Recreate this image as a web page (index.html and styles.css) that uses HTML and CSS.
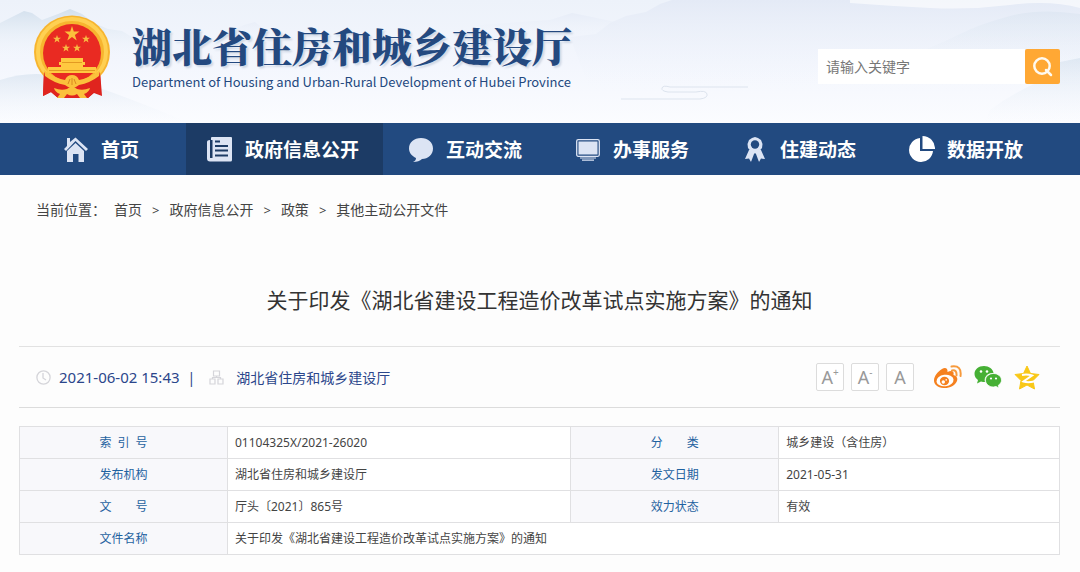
FILE: index.html
```html
<!DOCTYPE html>
<html lang="zh-Hans">
  <head>
    <meta charset="UTF-8" />
    <meta name="viewport" content="width=device-width, initial-scale=1.0" />
    <title>湖北省住房和城乡建设厅</title>
    <link rel="stylesheet" href="styles.css">
  </head>
  <body>
    <header class="header">
      <!-- 背景远山 -->
      <svg class="header-bg" viewBox="0 0 1080 123" preserveAspectRatio="none" aria-hidden="true">
        <defs>
          <linearGradient id="sky" x1="0" y1="0" x2="0" y2="1">
            <stop offset="0" stop-color="#edf2fa" />
            <stop offset="0.5" stop-color="#f3f6fd" />
            <stop offset="1" stop-color="#fbfcff" />
          </linearGradient>
          <linearGradient id="hill" x1="0" y1="0" x2="0" y2="1">
            <stop offset="0" stop-color="#d3e0ed" />
            <stop offset="1" stop-color="#f0f5fb" stop-opacity="0" />
          </linearGradient>
          <linearGradient id="hill2" x1="0" y1="0" x2="0" y2="1">
            <stop offset="0" stop-color="#e4eaf6" />
            <stop offset="1" stop-color="#f4f7fd" stop-opacity="0" />
          </linearGradient>
        </defs>
        <rect width="1080" height="123" fill="url(#sky)" />
        <path fill="url(#hill)" d="M0 23 12 17 24 11 32 13 42 20 58 14 70 9 82 14 94 23 108 29 122 31 140 42 165 56H0z" />
        <path fill="url(#hill)" opacity="0.6" d="M0 80Q35 68 75 80T190 123H0z" />
        <path fill="url(#hill2)" opacity="0.5" d="M220 36 244 25 255 22 270 34 300 42H220z" />
        <path fill="url(#hill2)" opacity="0.7" d="M480 25 520 22 550 20 572 13 592 17 615 22 640 40H480z" />
        <path fill="url(#hill2)" d="M570 37 596 34 610 23 626 16 646 12 660 4 672 0H1080V90H590z" />
        <path fill="#fff" opacity="0.6" d="M850 0H1080V8Q1050 0 1010 5T930 8T850 3z" />
        <path fill="url(#hill)" opacity="0.4" d="M900 60Q940 44 960 34T1010 16T1080 14V75H880z" />
        <path fill="url(#hill)" opacity="0.6" d="M990 110Q1010 95 1034 84T1060 62L1080 58V123H985z" />
        <path fill="none" stroke="#dde4ee" d="M621 99H700Q708 98 707 94T696 92H668Q661 91 662 88T670 87H748" />
      </svg>

      <a class="brand" href="#">
        <svg class="emblem" viewBox="0 0 76 84" role="img" aria-label="国徽">
          <path fill="#d81f1c" d="M10 56 9 81 17 77 24 83H54L60 78 68 81 66 56z" />
          <path fill="#fbc13c" d="M20 74Q26 69 33 74L38 70 43 74Q50 69 56 74L50 76 47 83H42L38 77 34 83H29L26 76z" />
          <ellipse cx="38" cy="37" rx="38" ry="36.500" fill="#f7b52f" />
          <ellipse cx="38" cy="37" rx="34" ry="33" fill="none" stroke="#ffd052" stroke-width="4" />
          <ellipse cx="38" cy="38" rx="29" ry="29" fill="#e92a22" />
          <path fill="#fbc13c" d="M38 11 39.800 16.500H45.500L40.900 20 42.700 25.500 38 22 33.300 25.500 35.100 20 30.500 16.500H36.200z" />
          <g fill="#f8bb42">
            <path id="star" d="M23 20 24 22.800H27L24.600 24.600 25.500 27.500 23 25.700 20.500 27.500 21.400 24.600 19 22.800H22z" />
            <use href="#star" x="29" />
            <use href="#star" x="9" y="9" />
            <use href="#star" x="20" y="9" />
          </g>
          <path fill="#ffc940" d="M27 43H49V47H51V50H49V52H62L63 58H13L14 52H27V50H25V47H27z" />
          <path fill="none" stroke="#e39a22" d="M28 47.500H48M15 55.500H61" />
          <!-- 绶带 -->
          <path fill="#e0241e" d="M10 57 22 66 32 69H44L54 66 66 57 67 80 60 77 54 83H24L17 77 9 81z" />
          <path fill="#fbc13c" d="M10 55Q20 63 31 65Q33 60 38 60T45 65Q56 63 66 55L65 61Q56 68 45 70Q38 76 31 70Q20 68 11 61z" />
          <path fill="#fbc13c" d="M20 73Q27 76 33 74Q38 69 43 74Q49 76 56 73Q55 77 50 79L53 83H46L43 79Q38 82 33 79L30 83H23L26 79Q21 77 20 73z" />
          <path fill="none" stroke="#d98920" d="M34 69 36 64M38 70V63M42 69 40 64" />
        </svg>
        <span class="brand-text">
          <span class="brand-cn">湖北省住房和城乡建设厅</span>
          <span class="brand-en">Department of Housing and Urban-Rural Development of Hubei Province</span>
        </span>
      </a>

      <form class="search">
        <input class="search-input" type="text" placeholder="请输入关键字" aria-label="请输入关键字" />
        <button class="search-btn" type="button" aria-label="搜索">
          <svg width="21" height="21" viewBox="0 0 21 21" fill="none" stroke="#fffaf0" stroke-width="2.500">
            <circle cx="10" cy="10" r="7.700" />
            <path d="M14 14 19 19" stroke-linecap="round" />
          </svg>
        </button>
      </form>
    </header>

    <nav class="nav">
      <a class="nav-item" href="#">
        <svg class="nav-icon" viewBox="0 0 26 26">
          <path d="M4 2H7V6L12.500 1.500 25 13 23 15 12.500 5 3 15 1 13 4 10z" />
          <path d="M12.500 7 21 15V26H15.500V18H10V26H4V15z" />
        </svg>
        首页
      </a>
      <a class="nav-item active" href="#">
        <svg class="nav-icon" viewBox="0 0 26 26">
          <path d="M3 4V22H4V2Q4 1 5 1H24Q25 1 25 2V24Q25 25.500 23.500 25.500H3Q0 25.500 0 22.500V6Q0 4 3 4z" />
          <path class="nav-line" d="M4.500 4V22M8 5.500H13M8 10H21M8 14.500H21M8 19.500H21" />
        </svg>
        政府信息公开
      </a>
      <a class="nav-item" href="#">
        <svg class="nav-icon" viewBox="0 0 26 26">
          <path d="M13 2C6 2 1 6.500 1 12.500 1 17 4 20 8 22 8 24 7 25 5 26 9 26 12 25 14 23 20 23 25 18.500 25 12.500 25 6.500 20 2 13 2z" />
        </svg>
        互动交流
      </a>
      <a class="nav-item" href="#">
        <svg class="nav-icon" viewBox="0 0 26 26">
          <rect x="1.700" y="3.700" width="22.600" height="16.600" rx="1.500" fill="none" stroke="#dce4f4" stroke-width="1.300" />
          <path d="M3.500 5.500H22.500V18.500H3.500zM5 21.500H21V22.500H5zM7 23.500H19V24.800H7z" />
        </svg>
        办事服务
      </a>
      <a class="nav-item" href="#">
        <svg class="nav-icon" viewBox="0 0 26 26">
          <path d="M7 14 3 23 7 22.500 9 26 12 18 14 18 17 26 19 22.500 23 23 19 14z" />
          <path d="M13 1 16 2 19 4 20.500 8 20 12 17 15.500 13 17 9 15.500 6 12 5.500 8 7 4 10 2z" />
          <circle class="nav-hole" cx="13" cy="8.500" r="4.200" />
          <path class="nav-line thin" d="M13 17V20L10 26M13 20 16 26" />
        </svg>
        住建动态
      </a>
      <a class="nav-item" href="#">
        <svg class="nav-icon white" viewBox="0 0 26 26">
          <path d="M11 2V15H24A12 12 0 1 1 11 2z" />
          <path d="M13.500 0A12.500 12.500 0 0 1 26 13H13.500z" />
        </svg>
        数据开放
      </a>
    </nav>

    <main class="main">
      <div class="crumbs">
        <span class="crumbs-label">当前位置：</span>
        <a href="#">首页</a>
        <span class="sep">&gt;</span>
        <a href="#">政府信息公开</a>
        <span class="sep">&gt;</span>
        <a href="#">政策</a>
        <span class="sep">&gt;</span>
        <a href="#">其他主动公开文件</a>
      </div>

      <h1 class="title">关于印发《湖北省建设工程造价改革试点实施方案》的通知</h1>

      <div class="meta">
        <div class="meta-info">
          <svg width="15" height="15" viewBox="0 0 15 15" fill="none" stroke="#d5d5da" stroke-width="1.300">
            <circle cx="7.500" cy="7.500" r="6.600" />
            <path d="M7 3V8L10 10" />
          </svg>
          <time class="time">2021-06-02 15:43</time>
          <span class="bar">|</span>
          <svg width="15" height="15" viewBox="0 0 15 15" fill="none" stroke="#d5d5da" stroke-width="1.200">
            <path d="M4.500 1H10.500V6H4.500zM1 9H6V14H1zM9 9H14V14H9zM7.500 6V8M3.500 9V7.500H11.500V9" />
          </svg>
          <span class="org">湖北省住房和城乡建设厅</span>
        </div>
        <div class="tools">
          <button class="font-btn" type="button">A<sup>+</sup></button>
          <button class="font-btn" type="button">A<sup>-</sup></button>
          <button class="font-btn" type="button">A</button>
          <div class="share">
            <a href="#" aria-label="微博">
              <svg width="29" height="26" viewBox="0 0 29 26">
                <path fill="#f5811f" d="M9 5C12 3 15 4 14.500 8 18 6.500 21.500 6.500 20.500 11 24 12 25 14.500 24 17 22 22 16 24.500 10.500 24 4.500 23.500 1 20.500 1 16.500 1 12 5 7.500 9 5z" />
                <ellipse cx="12" cy="16.500" rx="8.600" ry="5.700" transform="rotate(-8 12 16.500)" fill="#fff" />
                <ellipse cx="11.500" cy="17" rx="4.600" ry="4.200" fill="#f5811f" />
                <circle cx="10.300" cy="18" r="1.700" fill="#fff" />
                <circle cx="13.200" cy="15.900" r="0.800" fill="#fff" />
                <path fill="none" stroke="#f79a3c" stroke-width="2" stroke-linecap="round" d="M19 6.500Q24 5.500 23.500 11.500M18.500 2.500Q29 1 27.500 12" />
              </svg>
            </a>
            <a href="#" aria-label="微信">
              <svg width="28" height="24" viewBox="0 0 28 24">
                <path fill="#46b035" d="M10 1C4.500 1 .5 4.500 .5 9 .5 11.500 2 13.500 4 15L3 18.500 7 16.500Q9 17 11 17A8 7 0 0 1 19.500 8C19 4 15 1 10 1z" />
                <path fill="#46b035" d="M19.500 8.500C15 8.500 11.500 11.500 11.500 15.200 11.500 19 15 22 19.500 22L22 21.500 25 23 24.300 20.300C26.500 19 27.500 17 27.500 15.200 27.500 11.500 24 8.500 19.500 8.500z" stroke="#fff" stroke-width="0.800" />
                <g fill="#fff">
                  <circle cx="7" cy="6.500" r="1.300" />
                  <circle cx="13" cy="6.500" r="1.300" />
                  <circle cx="17" cy="13.500" r="1.100" />
                  <circle cx="22" cy="13.500" r="1.100" />
                </g>
              </svg>
            </a>
            <a href="#" aria-label="QQ空间">
              <svg width="26" height="25" viewBox="0 0 26 25">
                <path fill="#f9c817" stroke="#f9c817" stroke-linejoin="round" d="M13 1 16.500 8.500 25 9.500 19 15.500 20.500 24 13 20 5.500 24 7 15.500 1 9.500 9.500 8.500z" />
                <path fill="none" stroke="#fff" stroke-width="2" d="M8 10Q13 9 18 10.500L9.500 16.500Q14 18 20 16.500" />
              </svg>
            </a>
          </div>
        </div>
      </div>

      <table class="info">
        <tr>
          <th scope="row">索&ensp;引&ensp;号</th>
          <td>01104325X/2021-26020</td>
          <th scope="row">分&emsp;&emsp;类</th>
          <td>城乡建设（含住房）</td>
        </tr>
        <tr>
          <th scope="row">发布机构</th>
          <td>湖北省住房和城乡建设厅</td>
          <th scope="row">发文日期</th>
          <td>2021-05-31</td>
        </tr>
        <tr>
          <th scope="row">文&emsp;&emsp;号</th>
          <td>厅头〔2021〕865号</td>
          <th scope="row">效力状态</th>
          <td>有效</td>
        </tr>
        <tr>
          <th scope="row">文件名称</th>
          <td colspan="3">关于印发《湖北省建设工程造价改革试点实施方案》的通知</td>
        </tr>
      </table>
    </main>
  </body>
</html>
```
FILE: styles.css
```css
* {
  box-sizing: border-box;
}

body {
  margin: 0;
  background-color: #fdfdfd;
  color: #444;
  font-family: "Noto Sans", "Noto Sans CJK SC", sans-serif;
  font-size: 14px;
}

a {
  color: inherit;
  text-decoration: none;
}

/* 顶部 */
.header {
  position: relative;
  display: flex;
  justify-content: space-between;
  align-items: flex-start;
  padding: 15px 20px 24px 34px;
}

.header-bg {
  position: absolute;
  top: 0;
  left: 0;
  width: 100%;
  height: 100%;
  z-index: -1;
}

.brand {
  display: flex;
  gap: 22px;
}

.emblem {
  width: 76px;
  height: 84px;
}

.brand-text {
  display: flex;
  flex-direction: column;
  gap: 4px;
  padding-top: 6px;
  color: #24497f;
  white-space: nowrap;
}

.brand-cn {
  font-family: "Noto Serif CJK SC", "Noto Sans CJK SC", serif;
  font-size: 40px;
  font-weight: 900;
  line-height: 48px;
  text-shadow: 2px 2px 2px #d0d8e5;
}

.brand-en {
  font-family: "Noto Sans CJK SC", sans-serif;
  font-size: 13px;
  line-height: 18px;
}

.search {
  display: flex;
  margin-top: 34px;
}

.search-input {
  width: 207px;
  height: 35px;
  padding: 0 8px;
  border: none;
  background-color: #fff;
  font-family: inherit;
  font-size: 14px;
}

.search-input::placeholder {
  color: #777;
}

.search-btn {
  display: flex;
  justify-content: center;
  align-items: center;
  width: 35px;
  height: 35px;
  padding: 0;
  border: none;
  border-radius: 2px;
  background-color: #ffa834;
}

/* 导航 */
.nav {
  display: grid;
  grid-template-columns: 167fr 197fr repeat(4, 167fr);
  padding: 0 29px 0 19px;
  background-color: #224a80;
}

.nav-item {
  display: flex;
  justify-content: center;
  align-items: center;
  gap: 12px;
  height: 52px;
  padding-right: 3px;
  color: #fff;
  font-size: 19px;
  font-weight: bold;
  white-space: nowrap;
}

.nav-item.active {
  background-color: #1c3b65;
}

.nav-icon {
  width: 26px;
  height: 26px;
  fill: #dce4f4;
}

.nav-icon.white {
  fill: #fff;
}

.nav-line {
  fill: none;
  stroke: #1c3b65;
  stroke-width: 2;
}

.nav-line.thin {
  stroke: #224a80;
  stroke-width: 1;
}

.nav-hole {
  fill: #224a80;
}

/* 正文 */
.main {
  padding: 0 20px 17px 19px;
}

.crumbs {
  display: flex;
  gap: 10px;
  padding: 25px 17px 0;
  line-height: 20px;
}

.crumbs-label {
  margin-right: -2px;
}

.sep {
  font-size: 13px;
}

.title {
  margin: 65px 0 31px;
  color: #333;
  font-size: 21px;
  font-weight: normal;
  line-height: 30px;
  text-align: center;
}

.meta {
  display: flex;
  justify-content: space-between;
  align-items: center;
  height: 62px;
  padding: 0 20px 0 17px;
  border-top: 1px solid #e2e2e2;
  border-bottom: 1px solid #dcdcdc;
}

.meta-info {
  display: flex;
  align-items: center;
  gap: 8px;
  color: #2b468b;
}

.time {
  font-size: 15px;
}

.bar {
  margin-right: 6px;
}

.org {
  margin-left: 4px;
}

.tools {
  display: flex;
  align-items: center;
  gap: 7px;
}

.font-btn {
  display: flex;
  justify-content: center;
  width: 28px;
  height: 28px;
  padding: 0;
  border: 1px solid #dcdcdc;
  border-radius: 2px;
  background-color: #fff;
  color: #999;
  font-family: "Noto Sans", sans-serif;
  font-size: 18px;
  line-height: 26px;
}

.font-btn sup {
  font-size: 10px;
  line-height: 16px;
}

.share {
  display: flex;
  align-items: center;
  gap: 12px;
  margin-left: 12px;
}

.share a {
  display: flex;
}

/* 信息表 */
.info {
  width: 100%;
  margin-top: 18px;
  border-collapse: collapse;
  table-layout: fixed;
  font-size: 12px;
  line-height: 18px;
}

.info th,
.info td {
  height: 32px;
  padding: 0 7px;
  border: 1px solid #e0e0e2;
  text-align: left;
}

.info th {
  width: 20%;
  background-color: #f8f8fb;
  color: #1f62a0;
  font-weight: normal;
  text-align: center;
}

.info td {
  background-color: #fff;
}

.info td:last-child {
  width: 27%;
}
```
